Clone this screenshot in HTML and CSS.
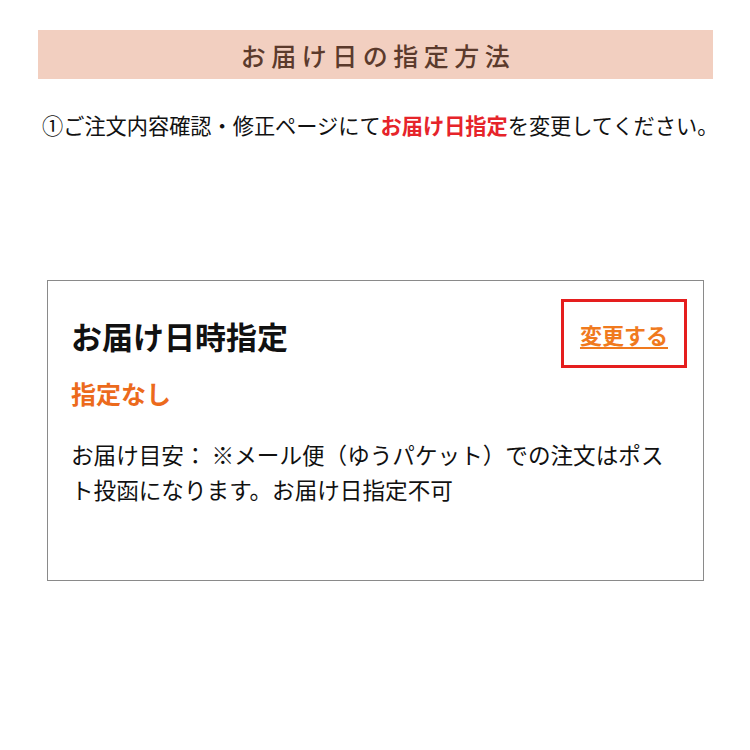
FILE: index.html
```html
<!DOCTYPE html>
<html lang="ja">
<head>
    <meta charset="UTF-8">
    <title>お届け日の指定方法</title>
    <link rel="stylesheet" href="styles.css">
</head>
<body>
    <div class="page">
        <h1 class="title-bar">お届け日の指定方法</h1>
        <p class="step">①ご注文内容確認・修正ページにて<strong>お届け日指定</strong>を変更してください。</p>
        <div class="card">
            <div class="card-head">
                <div class="card-title">お届け日時指定</div>
                <div class="change-box">
                    <a class="change-link" href="#">変更する</a>
                </div>
            </div>
            <div class="status">指定なし</div>
            <p class="note">お届け目安： ※メール便（ゆうパケット）での注文はポスト投函になります。お届け日指定不可</p>
        </div>
    </div>
</body>
</html>
```

FILE: styles.css
```css
body {
    margin: 0;
    padding: 0;
    background-color: #ffffff;
    font-family: "Noto Sans CJK JP", "Noto Sans", sans-serif;
    color: #111111;
}
.page {
    width: 750px;
    height: 750px;
    padding-top: 30px;
    box-sizing: border-box;
    display: flex;
    flex-direction: column;
}
.title-bar {
    margin: 0 37px 0 38px;
    height: 49px;
    background-color: #f2cfc0;
    color: #5b3a2c;
    font-size: 25px;
    font-weight: 500;
    letter-spacing: 5.5px;
    text-indent: 5px;
    display: flex;
    align-items: center;
    justify-content: center;
}
.step {
    margin: 30px 0 0 42px;
    font-size: 21.2px;
    line-height: 32px;
    white-space: nowrap;
}
.step strong {
    color: #e6242a;
    font-weight: 700;
}
.card {
    margin: 139px 46px 0 47px;
    height: 301px;
    box-sizing: border-box;
    border: 1.5px solid #8a8a8a;
    padding: 18px 16px 0 23px;
}
.card-head {
    display: flex;
    justify-content: space-between;
    align-items: center;
}
.card-title {
    font-size: 31px;
    font-weight: 700;
    line-height: 1;
    margin-top: 4px;
}
.change-box {
    width: 126px;
    height: 69px;
    box-sizing: border-box;
    border: 3px solid #e51e1e;
    display: flex;
    align-items: center;
    justify-content: center;
}
.change-link {
    color: #f07a1e;
    font-size: 22px;
    font-weight: 700;
    text-decoration: underline;
    text-underline-offset: 3px;
}
.status {
    margin-top: 10px;
    color: #ec6a1c;
    font-size: 25px;
    font-weight: 700;
    line-height: 30px;
}
.note {
    margin: 29px 0 0 0;
    padding-right: 10px;
    font-size: 22.6px;
    line-height: 35px;
}
```
